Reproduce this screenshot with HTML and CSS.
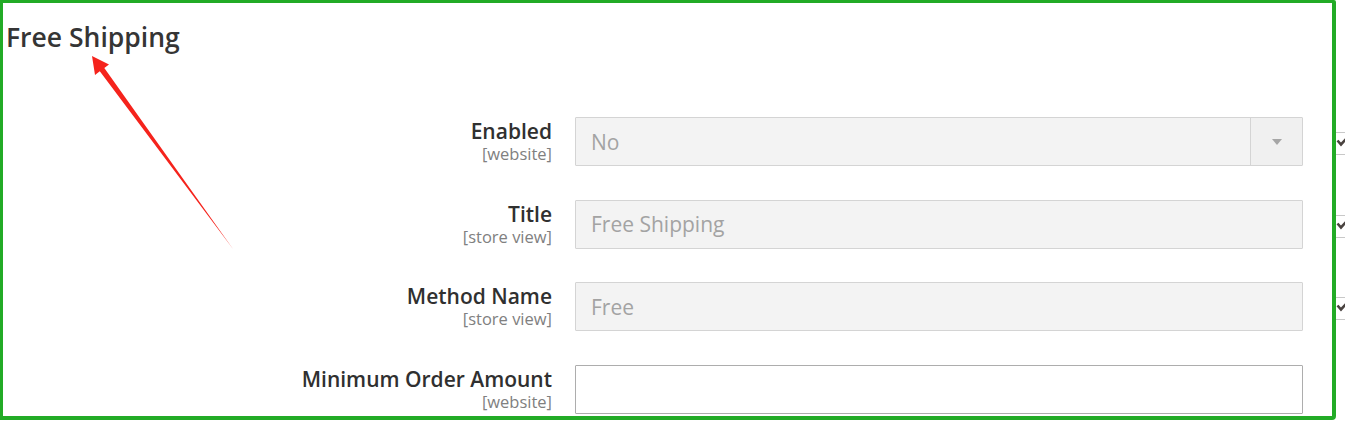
FILE: index.html
```html
<!DOCTYPE html>
<html lang="en">
<head>
<meta charset="utf-8">
<title>Free Shipping</title>
<link rel="stylesheet" href="styles.css">
</head>
<body>
<div class="page">
  <section class="panel">
    <h2 class="panel-title">Free Shipping</h2>
    <div class="fields">
      <div class="field">
        <div class="label"><span class="label-text">Enabled</span><span class="scope">[website]</span></div>
        <div class="input is-disabled select">
          <span class="input-value">No</span>
          <span class="select-arrow"></span>
        </div>
      </div>
      <div class="field">
        <div class="label"><span class="label-text">Title</span><span class="scope">[store view]</span></div>
        <div class="input is-disabled"><span class="input-value">Free Shipping</span></div>
      </div>
      <div class="field">
        <div class="label"><span class="label-text">Method Name</span><span class="scope">[store view]</span></div>
        <div class="input is-disabled"><span class="input-value">Free</span></div>
      </div>
      <div class="field">
        <div class="label"><span class="label-text">Minimum Order Amount</span><span class="scope">[website]</span></div>
        <div class="input"></div>
      </div>
    </div>
  </section>
  <aside class="side-checks">
    <div class="check"><svg viewBox="0 0 9 23" width="9" height="23"><path d="M1.5 8.5 L5 12.5 L11 6" fill="none" stroke="#4a4340" stroke-width="2.6"/></svg></div>
    <div class="check"><svg viewBox="0 0 9 23" width="9" height="23"><path d="M1.5 8.5 L5 12.5 L11 6" fill="none" stroke="#4a4340" stroke-width="2.6"/></svg></div>
    <div class="check"><svg viewBox="0 0 9 23" width="9" height="23"><path d="M1.5 8.5 L5 12.5 L11 6" fill="none" stroke="#4a4340" stroke-width="2.6"/></svg></div>
  </aside>
  <svg class="annotation" width="1345" height="424" viewBox="0 0 1345 424">
    <polygon points="92,56 109,64.5 104.3,68 233,249 99.8,71.3 95,75" fill="#f5231c"/>
  </svg>
</div>
</body>
</html>
```

FILE: styles.css
```css
html, body {
  margin: 0;
  padding: 0;
  background: #ffffff;
}

body {
  font-family: "Open Sans", "Liberation Sans", sans-serif;
  color: #303030;
}

.page {
  position: relative;
  display: flex;
  align-items: flex-start;
  width: 1345px;
  height: 424px;
  overflow: hidden;
}

.panel {
  flex: 0 0 1336px;
  box-sizing: border-box;
  height: 420px;
  border-style: solid;
  border-color: #22ab26;
  border-width: 3px 4px 4px 3px;
  border-radius: 0 2px 4px 0;
  background: #ffffff;
}

.panel-title {
  margin: 16px 0 0;
  padding-left: 3px;
  font-size: 26.5px;
  line-height: 36px;
  font-weight: 600;
  color: #353535;
}

.fields {
  margin-top: 62px;
  display: flex;
  flex-direction: column;
  gap: 33.67px;
}

.field {
  display: grid;
  grid-template-columns: 549px 728px;
  column-gap: 23px;
  align-items: start;
}

.label {
  display: flex;
  flex-direction: column;
  align-items: flex-end;
  padding-top: 2px;
  text-align: right;
}

.label-text {
  font-size: 21px;
  line-height: 24px;
  font-weight: 600;
  color: #303030;
}

.scope {
  margin-top: 1px;
  font-size: 16.5px;
  line-height: 20px;
  color: #808080;
}

.input {
  box-sizing: border-box;
  height: 49px;
  display: flex;
  align-items: center;
  padding-left: 15px;
  border: 1px solid #adadad;
  background: #ffffff;
  border-radius: 1px;
}

.input.is-disabled {
  border-color: #d4d4d4;
  background: #f3f3f3;
}

.input-value {
  flex: 1;
  font-size: 21px;
  color: #a3a3a3;
}

.select-arrow {
  align-self: stretch;
  width: 51px;
  border-left: 1px solid #d4d4d4;
  display: flex;
  align-items: center;
  justify-content: center;
  background: #f0f0f0;
}

.select-arrow::after {
  content: "";
  width: 0;
  height: 0;
  border-left: 5px solid transparent;
  border-right: 5px solid transparent;
  border-top: 6px solid #a6a6a6;
  margin-top: 1px;
}

.side-checks {
  flex: 0 0 9px;
  display: flex;
  flex-direction: column;
  gap: 59.67px;
  padding-top: 132px;
}

.check {
  box-sizing: border-box;
  height: 23px;
  border-top: 1px solid #c8c8c8;
  border-bottom: 1px solid #c8c8c8;
  overflow: hidden;
}

.check svg {
  display: block;
  margin-top: -1px;
}

.annotation {
  position: absolute;
  left: 0;
  top: 0;
  pointer-events: none;
}
```
